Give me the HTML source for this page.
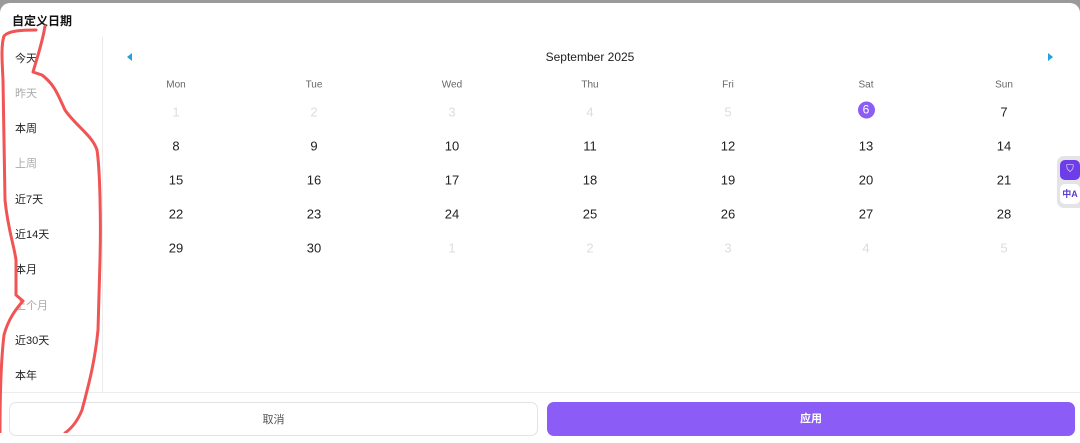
<!DOCTYPE html>
<html><head><meta charset="utf-8"><style>
*{margin:0;padding:0;box-sizing:border-box}
body{width:1080px;height:433px;background:#9a9a9a;font-family:"Liberation Sans","Noto Sans CJK SC",sans-serif;overflow:hidden;position:relative}
.card{position:absolute;left:0;top:3px;width:1080px;height:440px;background:#fff;border-radius:10px 10px 0 0}
.title{position:absolute;left:12px;top:9px;font-size:12px;font-weight:bold;color:#111}
.side{position:absolute;left:0;top:37px;width:103px;height:355px;border-right:1px solid #ececec}
.side div{position:absolute;left:15px;font-size:11px;color:#222}
.side .g{color:#aaa}
.hr{position:absolute;left:0;top:392px;width:1080px;border-top:1px solid #ececec}
.btn{position:absolute;top:402px;height:34px;border-radius:7px;font-size:11px;text-align:center;line-height:34px}
.c{position:absolute;font-size:13px;color:#222;text-align:center;width:138px;transform:translateY(-50%)}
.dn{color:#666;font-size:10px}
.m{color:#ddd}
</style></head><body>
<div class="card">
<div class="title">自定义日期</div>
</div>
<div class="side">
<div style="top:13px">今天</div>
<div class="g" style="top:48px">昨天</div>
<div style="top:83px">本周</div>
<div class="g" style="top:118px">上周</div>
<div style="top:154px">近7天</div>
<div style="top:189px">近14天</div>
<div style="top:224px">本月</div>
<div class="g" style="top:260px">上个月</div>
<div style="top:295px">近30天</div>
<div style="top:330px">本年</div>
</div>
<svg style="position:absolute;left:126px;top:53px" width="8" height="8"><path d="M6 0L1 4L6 8Z" fill="#1fa3e0"/></svg>
<svg style="position:absolute;left:1046px;top:53px" width="8" height="8"><path d="M2 0L7 4L2 8Z" fill="#1fa3e0"/></svg>
<div class="c" style="left:521px;top:57px;font-size:12px">September 2025</div>
<div id="cal"></div>
<script>
var h='',cx=[107,245,383,521,659,797,935],d=['Mon','Tue','Wed','Thu','Fri','Sat','Sun'];
d.forEach(function(n,i){h+='<div class="c dn" style="left:'+cx[i]+'px;top:85px">'+n+'</div>'});
var rows=[[1,2,3,4,5,6,7],[8,9,10,11,12,13,14],[15,16,17,18,19,20,21],[22,23,24,25,26,27,28],[29,30,1,2,3,4,5]];
rows.forEach(function(r,ri){r.forEach(function(v,i){var y=112+ri*34;var cls=(ri==0&&i<5)||(ri==4&&i>1)?'c m':'c';
if(ri==0&&i==5){h+='<div class="c" style="left:'+cx[i]+'px;top:'+(y-2)+'px"><span style="display:inline-block;width:17px;height:17px;border-radius:50%;background:#8b5cf6;color:#fff;line-height:17px;font-size:12px">6</span></div>'}
else h+='<div class="'+cls+'" style="left:'+cx[i]+'px;top:'+y+'px">'+v+'</div>'})});
document.getElementById('cal').innerHTML=h;
</script>
<div class="hr"></div>
<div class="btn" style="left:9px;width:529px;border:1px solid #e3e3e3;color:#555">取消</div>
<div class="btn" style="left:547px;width:528px;background:#8b5cf6;color:#fff;font-weight:bold">应用</div>
<div style="position:absolute;left:1057px;top:156px;width:23px;height:52px;background:#e4e4e8;border-radius:7px 0 0 7px"></div>
<div style="position:absolute;left:1060px;top:160px;width:20px;height:20px;background:#6d3ee8;border-radius:5px;color:#fff;font-size:10px;text-align:center;line-height:20px">⛉</div>
<div style="position:absolute;left:1060px;top:184px;width:20px;height:20px;background:#fff;border-radius:5px;color:#5b3ad6;font-size:9px;text-align:center;line-height:20px;font-weight:bold">中A</div>
<svg style="position:absolute;left:0;top:0" width="1080" height="433"><g fill="none" stroke="#f05454" stroke-width="3" stroke-linecap="round" stroke-linejoin="round">
<path d="M36 30 C20 30 8 31 4 36 C1 45 2 60 3 80 L5 200 C8 230 14 245 16 260 L16 295 L23 301 C15 310 8 320 4 335 C1 360 0 400 0 433"/>
<path d="M45 26 C43 40 38 55 33 72 L42 75 C55 85 58 95 65 110 C75 125 92 135 97 150 C100 170 101 220 100 260 L98 330 C95 360 90 380 82 410 C78 420 72 428 65 433"/>
</g></svg>
</body></html>
